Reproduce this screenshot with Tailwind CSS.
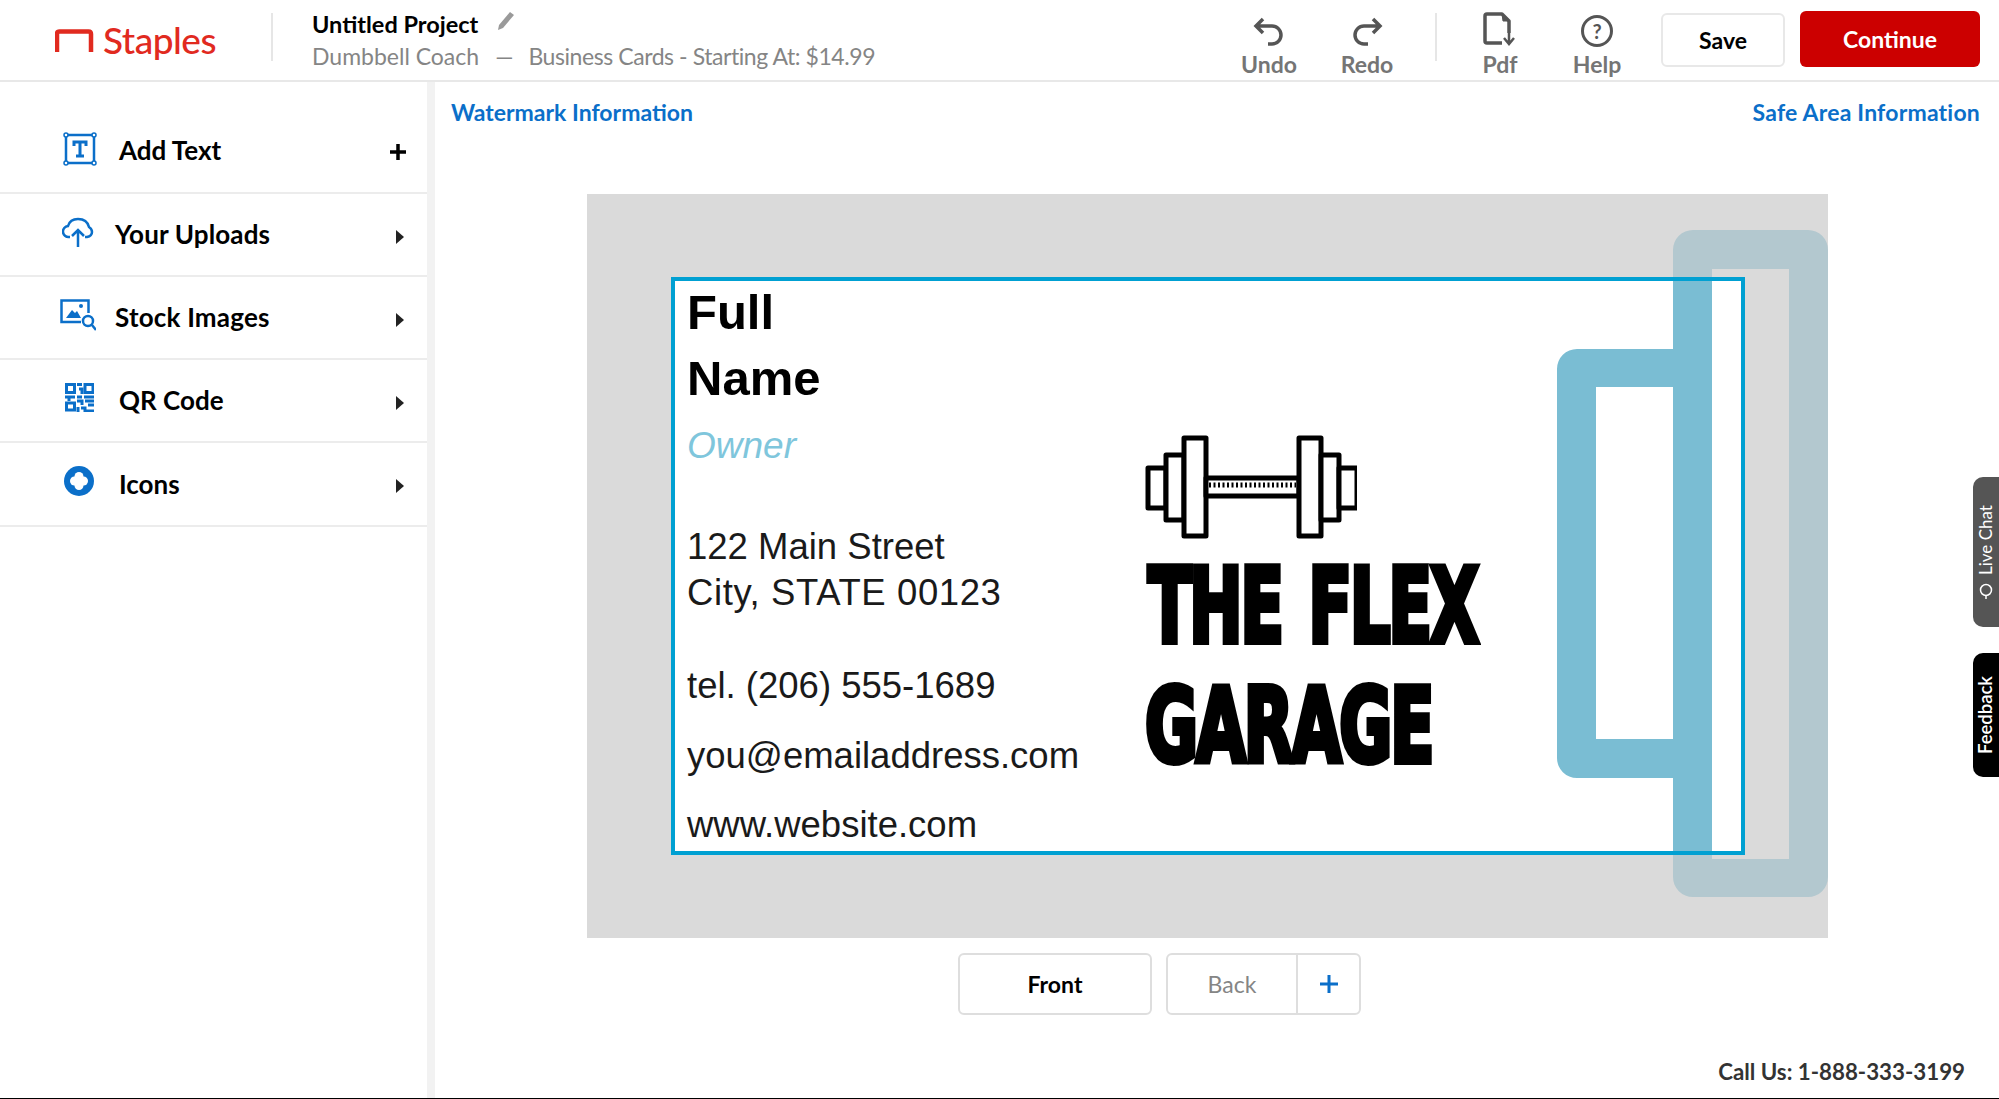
<!DOCTYPE html>
<html lang="en">
<head>
  <meta charset="UTF-8" />
  <title>Staples - Business Cards</title>
  <script src="https://cdn.jsdelivr.net/npm/@tailwindcss/browser@4"></script>
</head>
<body class="relative w-[1999px] h-[1099px] overflow-hidden bg-white font-['Lato','Open_Sans',sans-serif] border-b border-black flex flex-col">
  <!-- Header -->
  <header class="h-[82px] shrink-0 border-b-2 border-[#e8e8e8] flex items-start">
    <div class="w-[271px] h-[80px] pl-[55px] pt-[24px] flex items-start">
      <svg width="40" height="28" viewBox="0 0 40 28" class="mt-[4px]"><path d="M2 24V6q0-2.500 2.500-2.500h29q2.500 0 2.500 2.500v18" fill="none" stroke="#e12a1f" stroke-width="4.500"/></svg>
      <span class="ml-[8px] -mt-[2px] text-[37px] leading-[36px] tracking-[-0.5px] text-[#e12a1f] font-medium">Staples</span>
    </div>
    <div class="w-[2px] h-[48px] mt-[13px] bg-[#e6e6e6]"></div>
    <div class="ml-[39px] pt-[9px]">
      <div class="flex items-center h-[32px]">
        <span class="text-[23.500px] font-bold text-black">Untitled Project</span>
        <svg width="20" height="22" viewBox="0 0 20 22" class="ml-[18px] -mt-[8px]"><path d="M2 20l1-5L14 2l4 3L7 18z" fill="#9a9a9a"/></svg>
      </div>
      <div class="flex items-center h-[30px] text-[23px] text-[#858585]">
        <span>Dumbbell Coach</span><span class="ml-[16px]">—</span><span class="ml-[15px] tracking-[-0.43px]">Business Cards - Starting At: $14.99</span>
      </div>
    </div>
    <div class="ml-auto flex items-start text-[#757575] font-bold text-[23px]">
      <div class="w-[56px] flex flex-col items-center pt-[17px]">
        <svg width="32" height="30" viewBox="0 0 32 30" fill="none" stroke="#555" stroke-width="3.500"><path d="M10 2L3 9l7 7M3 9h16a8.500 8.500 0 0 1 0 18h-4"/></svg>
        <span class="leading-[26px] mt-[4px]">Undo</span>
      </div>
      <div class="w-[54px] ml-[43px] flex flex-col items-center pt-[17px]">
        <svg width="32" height="30" viewBox="0 0 32 30" fill="none" stroke="#555" stroke-width="3.500"><path d="M22 2l7 7-7 7M29 9H13a8.500 8.500 0 0 0 0 18h4"/></svg>
        <span class="leading-[26px] mt-[4px]">Redo</span>
      </div>
      <div class="w-[2px] h-[48px] mt-[13px] ml-[41px] bg-[#e6e6e6]"></div>
      <div class="w-[36px] ml-[45px] flex flex-col items-center pt-[12px]">
        <svg width="36" height="34" viewBox="0 0 36 34" fill="none" stroke="#555" stroke-width="3.500"><path d="M20 31H5q-2 0-2-2V4q0-2 2-2h15l7 7v12" stroke-linejoin="round"/><path d="M20 2l1 7h6" fill="#555" stroke-width="1"/><path d="M27 21v10M22 26l5 6 5-6" stroke-width="2.500"/></svg>
        <span class="leading-[26px] mt-[5px]">Pdf</span>
      </div>
      <div class="w-[48px] ml-[55px] flex flex-col items-center pt-[15px]">
        <div class="w-[32px] h-[32px] rounded-full border-[3px] border-[#555] flex items-center justify-center text-[#555] text-[20px] leading-none font-bold">?</div>
        <span class="leading-[26px] mt-[4px]">Help</span>
      </div>
      <div class="w-[124px] h-[54px] ml-[40px] mt-[13px] rounded-[6px] border-2 border-[#e8e8e8] flex items-center justify-center text-black">Save</div>
      <div class="w-[180px] h-[56px] ml-[15px] mr-[19px] mt-[11px] rounded-[6px] bg-[#cc0000] flex items-center justify-center text-white">Continue</div>
    </div>
  </header>

  <main class="flex-1 flex min-h-0">
    <!-- Sidebar -->
    <aside class="w-[435px] shrink-0 border-r-8 border-[#f2f2f2] text-[26px] font-bold text-black">
      <div class="h-[112px] pt-[27px] border-b-2 border-[#ececec] flex items-center pl-[63px] pr-[20px]">
        <svg width="34" height="34" viewBox="0 0 34 34" class="-mt-[4px]" fill="none" stroke="#0b6fc9" stroke-width="2.500"><rect x="3" y="3" width="28" height="28"/><g fill="#fff" stroke-width="1.500"><circle cx="3" cy="3" r="2"/><circle cx="31" cy="3" r="2"/><circle cx="3" cy="31" r="2"/><circle cx="31" cy="31" r="2"/></g><path d="M11 14v-4h12v4M17 10v14M13 24h8" stroke-width="3"/></svg>
        <span class="ml-[22px]">Add Text</span>
        <svg width="18" height="18" viewBox="0 0 18 18" class="ml-auto mt-[2px]"><path d="M9 1v16M1 9h16" stroke="#000" stroke-width="3.500"/></svg>
      </div>
      <div class="h-[83px] border-b-2 border-[#ececec] flex items-center pl-[62px] pr-[23px]">
        <svg width="32" height="32" viewBox="0 0 32 32" class="-mt-[6px]" fill="none" stroke="#0b6fc9" stroke-width="2.500"><path d="M8 21H7a5.500 5.500 0 0 1-1-11q2-7 10-7 9 0 11 8 3 2 3 5 0 4-5 5h-2"/><path d="M16 31V14M10 20l6-6 6 6"/></svg>
        <span class="ml-[21px] tracking-[0.15px]">Your Uploads</span>
        <svg width="8" height="14" viewBox="0 0 8 14" class="ml-auto mt-[4px]"><path d="M0 0l8 7-8 7z" fill="#222"/></svg>
      </div>
      <div class="h-[83px] border-b-2 border-[#ececec] flex items-center pl-[60px] pr-[23px]">
        <svg width="36" height="32" viewBox="0 0 36 32" class="-mt-[6px]" fill="none" stroke="#0b6fc9" stroke-width="2.500"><path d="M21 23H1.500V1.500h27V14"/><path d="M6 19l6-8 3 3 2-2 4 7z" fill="#0b6fc9" stroke="none"/><circle cx="21" cy="7" r="2" fill="#0b6fc9" stroke="none"/><circle cx="28" cy="22" r="5"/><path d="M32 26l4 5"/></svg>
        <span class="ml-[19px] tracking-[0.2px]">Stock Images</span>
        <svg width="8" height="14" viewBox="0 0 8 14" class="ml-auto mt-[4px]"><path d="M0 0l8 7-8 7z" fill="#222"/></svg>
      </div>
      <div class="h-[83px] border-b-2 border-[#ececec] flex items-center pl-[65px] pr-[23px]">
        <svg width="29" height="29" viewBox="0 0 29 29" class="-mt-[6px]" fill="none" stroke="#0b6fc9" stroke-width="3"><rect x="1.500" y="1.500" width="8" height="8"/><rect x="20" y="1.500" width="8" height="8"/><rect x="1.500" y="20" width="8" height="7"/><path d="M12 1.500h5M14 6h3v5M12 14h5M0 14h10M4 14v4M19 14h10M20 18h9M12 18h5v4M13 24v5M16 25h4v3h9M23 22h6"/></svg>
        <span class="ml-[25px]">QR Code</span>
        <svg width="8" height="14" viewBox="0 0 8 14" class="ml-auto mt-[4px]"><path d="M0 0l8 7-8 7z" fill="#222"/></svg>
      </div>
      <div class="h-[84px] border-b-2 border-[#ececec] flex items-center pl-[64px] pr-[23px]">
        <svg width="30" height="30" viewBox="0 0 30 30" class="-mt-[6px]"><circle cx="15" cy="15" r="15" fill="#0b6fc9"/><g fill="#fff"><circle cx="15" cy="10.500" r="4.500"/><circle cx="15" cy="19.500" r="4.500"/><circle cx="10.500" cy="15" r="4.500"/><circle cx="19.500" cy="15" r="4.500"/></g></svg>
        <span class="ml-[25px]">Icons</span>
        <svg width="8" height="14" viewBox="0 0 8 14" class="ml-auto mt-[4px]"><path d="M0 0l8 7-8 7z" fill="#222"/></svg>
      </div>
    </aside>

    <!-- Canvas area -->
    <section class="flex-1 min-w-0">
      <div class="h-[112px] flex justify-between pl-[16px] pr-[19px] pt-[15px] text-[23px] leading-[30px] font-bold text-[#0b6fc9]">
        <span>Watermark Information</span><span class="tracking-[0.2px]">Safe Area Information</span>
      </div>
      <div class="relative ml-[152px] w-[1241px] h-[744px] pl-[84px] pt-[83px] bg-[#dadada]">
        <div class="relative w-[1074px] h-[578px] border-[4px] border-[#00a0d2] bg-white flex font-['Liberation_Sans',sans-serif] text-[36.500px] text-[#1a1a1a]">
          <div class="pl-[12px] w-[470px] shrink-0">
            <p class="text-[49px] leading-[66px] font-bold text-black -mt-[2px]">Full<br />Name</p>
            <p class="mt-[5px] text-[37px] leading-[60px] italic text-[#7fc6dc]">Owner</p>
            <p class="mt-[48px] leading-[46px]">122 Main Street<br /><span class="tracking-[0.6px]">City, STATE 00123</span></p>
            <p class="mt-[47px] leading-[46px]">tel. (206) 555-1689</p>
            <p class="mt-[24px] leading-[46px]">you@emailaddress.com</p>
            <p class="mt-[23px] leading-[46px]">www.website.com</p>
          </div>
          <div class="pt-[154px]">
            <svg width="212" height="104" viewBox="0 0 212 104" fill="#fff" stroke="#000" stroke-width="5" stroke-linejoin="round">
              <rect x="3" y="33" width="18" height="40"/><rect x="21" y="20" width="18" height="65"/><rect x="39" y="3" width="22" height="98"/>
              <rect x="61" y="43" width="93" height="18"/>
              <rect x="154" y="3" width="22" height="98"/><rect x="176" y="20" width="18" height="65"/><rect x="194" y="33" width="18" height="40"/>
              <path d="M64 50h87" stroke-width="5" stroke-dasharray="2 2.500" fill="none"/>
            </svg>
            <p class="mt-[26px] h-[82px] w-[334px] origin-left scale-x-[0.68] ml-[3px] text-[104px] leading-[82px] tracking-[-3px] [word-spacing:-10px] font-bold whitespace-pre font-['DejaVu_Sans_Condensed','DejaVu_Sans',sans-serif] text-black [-webkit-text-stroke:6px_black]">THE  FLEX</p>
            <p class="mt-[38px] h-[82px] w-[288px] origin-left scale-x-[0.69] text-[104px] leading-[82px] tracking-[-3px] font-bold whitespace-pre font-['DejaVu_Sans_Condensed','DejaVu_Sans',sans-serif] text-black [-webkit-text-stroke:6px_black]">GARAGE</p>
          </div>
        </div>
        <!-- Safe area frames, drawn over the card -->
        <svg class="absolute left-0 top-0" width="1241" height="744" viewBox="0 0 1241 744" fill="none">
          <defs><clipPath id="cardArea"><rect x="84" y="83" width="1074" height="578"/></clipPath></defs>
          <path fill-rule="evenodd" fill="#b3c8cf" d="M1106 36h115a20 20 0 0 1 20 20v627a20 20 0 0 1-20 20h-115a20 20 0 0 1-20-20V56a20 20 0 0 1 20-20zM1125 75v590h77V75z"/>
          <g clip-path="url(#cardArea)">
            <rect x="1086" y="36" width="39" height="667" fill="#7abdd3"/>
            <path fill-rule="evenodd" fill="#7abdd3" d="M990 155h135v429H990a20 20 0 0 1-20-20V175a20 20 0 0 1 20-20zM1009 193v352h77V193z"/>
          </g>
          <rect x="86" y="85" width="1070" height="574" stroke="#00a0d2" stroke-width="4"/>
        </svg>
      </div>
      <div class="ml-[523px] mt-[15px] flex text-[23px]">
        <div class="w-[194px] h-[62px] rounded-[6px] border-2 border-[#dedede] flex items-center justify-center font-bold text-black">Front</div>
        <div class="ml-[14px] w-[195px] h-[62px] rounded-[6px] border-2 border-[#dedede] flex">
          <div class="w-[130px] border-r-2 border-[#dedede] flex items-center justify-center text-[#858585]">Back</div>
          <div class="flex-1 flex items-center justify-center"><svg width="20" height="20" viewBox="0 0 20 20"><path d="M10 1v18M1 10h18" stroke="#0b6fc9" stroke-width="3"/></svg></div>
        </div>
      </div>
      <p class="mt-[43px] pr-[34px] text-right text-[22.300px] leading-[28px] font-bold text-[#333]">Call Us: 1-888-333-3199</p>
    </section>
  </main>

  <!-- Side tabs -->
  <div class="absolute right-0 top-[477px] w-[26px] h-[150px] rounded-r-[10px] bg-[#555] flex items-center justify-center gap-[8px] text-white text-[17px] [writing-mode:vertical-rl] rotate-180">
    <svg width="14" height="16" viewBox="0 0 14 16" fill="none" stroke="#fff" stroke-width="1.500"><circle cx="7" cy="9" r="5.500"/><path d="M7 3.500V0"/></svg><span>Live Chat</span>
  </div>
  <div class="absolute right-0 top-[653px] w-[26px] h-[124px] rounded-r-[10px] bg-black flex items-center justify-center text-white text-[18.500px] font-semibold [writing-mode:vertical-rl] rotate-180">Feedback</div>
</body>
</html>
